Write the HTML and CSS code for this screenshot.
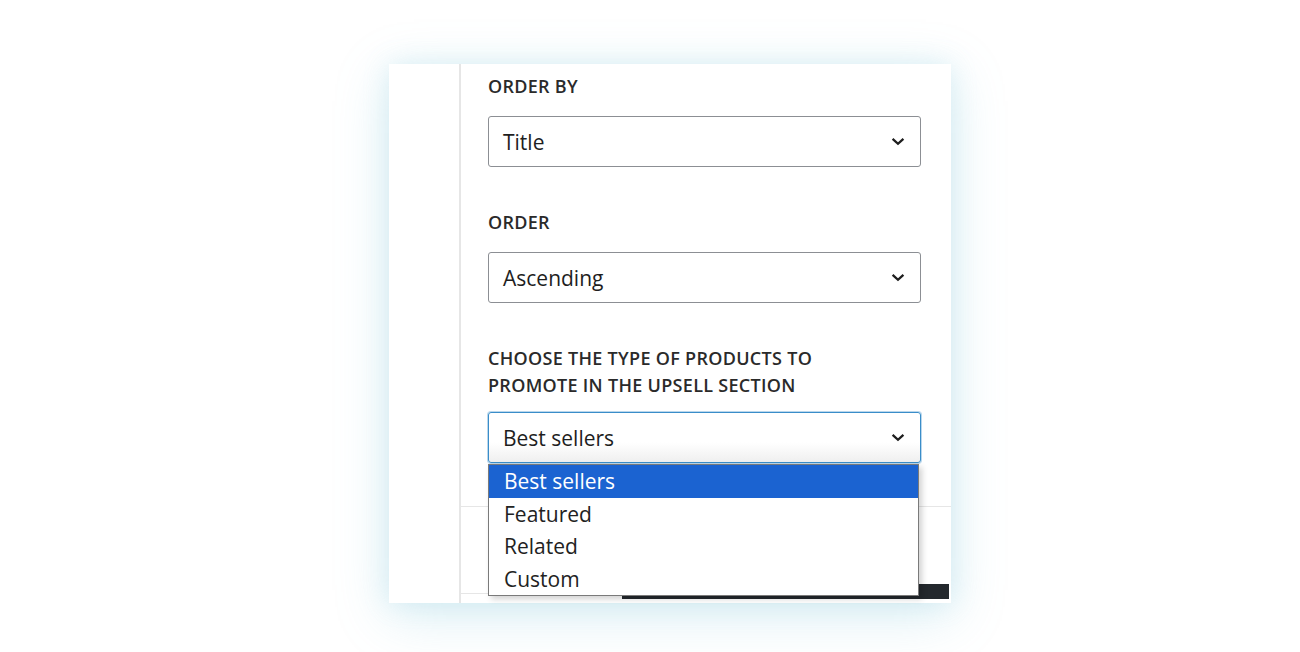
FILE: index.html
```html
<!DOCTYPE html>
<html lang="en">
<head>
<meta charset="utf-8">
<title>Upsell settings</title>
<link rel="stylesheet" href="styles.css">
</head>
<body>
<div class="card">
  <div class="sidebar"></div>
  <div class="main">
    <div class="panel">
      <div class="field">
        <div class="label">ORDER BY</div>
        <div class="select">
          <span class="value">Title</span>
          <svg class="chev" width="14" height="9" viewBox="0 0 14 9"><path d="M1.6 1.8l5.4 5 5.4-5" fill="none" stroke="#1e1e1e" stroke-width="2.3"/></svg>
        </div>
      </div>
      <div class="field">
        <div class="label">ORDER</div>
        <div class="select">
          <span class="value">Ascending</span>
          <svg class="chev" width="14" height="9" viewBox="0 0 14 9"><path d="M1.6 1.8l5.4 5 5.4-5" fill="none" stroke="#1e1e1e" stroke-width="2.3"/></svg>
        </div>
      </div>
      <div class="field">
        <div class="label">CHOOSE THE TYPE OF PRODUCTS TO<br>PROMOTE IN THE UPSELL SECTION</div>
        <div class="select-wrap">
          <div class="select focused">
            <span class="value">Best sellers</span>
            <svg class="chev" width="14" height="9" viewBox="0 0 14 9"><path d="M1.6 1.8l5.4 5 5.4-5" fill="none" stroke="#1e1e1e" stroke-width="2.3"/></svg>
          </div>
          <ul class="options">
            <li class="opt active">Best sellers</li>
            <li class="opt">Featured</li>
            <li class="opt">Related</li>
            <li class="opt">Custom</li>
          </ul>
        </div>
      </div>
    </div>
    <div class="section"></div>
    <div class="footer">
      <div class="footer-line"></div>
      <div class="dark-bar"></div>
    </div>
  </div>
</div>
</body>
</html>
```

FILE: styles.css
```css
* { box-sizing: border-box; }
html, body { margin: 0; padding: 0; background: #ffffff; }
body {
  width: 1300px;
  height: 652px;
  overflow: hidden;
  padding: 64px 0 0 389px;
  font-family: "Open Sans", "Noto Sans", sans-serif;
  color: #1e1e1e;
}
.card {
  width: 562px;
  height: 539px;
  background: #fff;
  display: flex;
  box-shadow: 0 12px 50px rgba(120, 195, 215, 0.28), 0 0 24px rgba(150, 210, 225, 0.24);
}
.sidebar { width: 70px; flex: none; }
.main {
  flex: 1;
  border-left: 2px solid #e6e6e6;
  display: flex;
  flex-direction: column;
}
.panel {
  padding: 9px 30px 0 27px;
  display: flex;
  flex-direction: column;
}
.field { display: flex; flex-direction: column; }
.field + .field { margin-top: 42px; }
.label {
  font-size: 18px;
  font-weight: 550;
  line-height: 27px;
  letter-spacing: 0.3px;
  color: #2a2a2a;
  margin-bottom: 16px;
}
.field + .field + .field .label { margin-bottom: 13px; }
.select-wrap { position: relative; }
.select {
  height: 51px;
  border: 1px solid #8c8f94;
  border-radius: 3px;
  display: flex;
  align-items: center;
  justify-content: space-between;
  padding: 0 15px 0 14px;
  font-size: 21px;
  color: #1e1e1e;
  background: #fff;
}
.select.focused {
  border-color: #3a8dc9;
  box-shadow: 0 0 0 1px rgba(58, 141, 201, 0.35);
  background: linear-gradient(#fff 60%, #efefef);
}
.chev { display: block; }
.options {
  position: absolute;
  top: 52px;
  left: 0;
  width: 431px;
  margin: 0;
  padding: 0;
  list-style: none;
  background: #fff;
  border: 1px solid #7a7a7a;
  box-shadow: 3px 3px 6px rgba(0, 0, 0, 0.18);
  z-index: 5;
}
.opt {
  height: 32.5px;
  line-height: 32.5px;
  padding-left: 15px;
  font-size: 21px;
  color: #222;
}
.opt.active { background: #1b63d1; color: #fff; }
.section {
  margin-top: 43px;
  height: 78px;
  border-top: 1px solid #e6e6e6;
}
.footer {
  display: flex;
  height: 18px;
}
.footer-line {
  flex: 1;
  margin-top: 9px;
  border-top: 1px solid #e6e6e6;
}
.dark-bar {
  width: 327px;
  height: 15px;
  margin-right: 2px;
  background: #23282d;
}
```
